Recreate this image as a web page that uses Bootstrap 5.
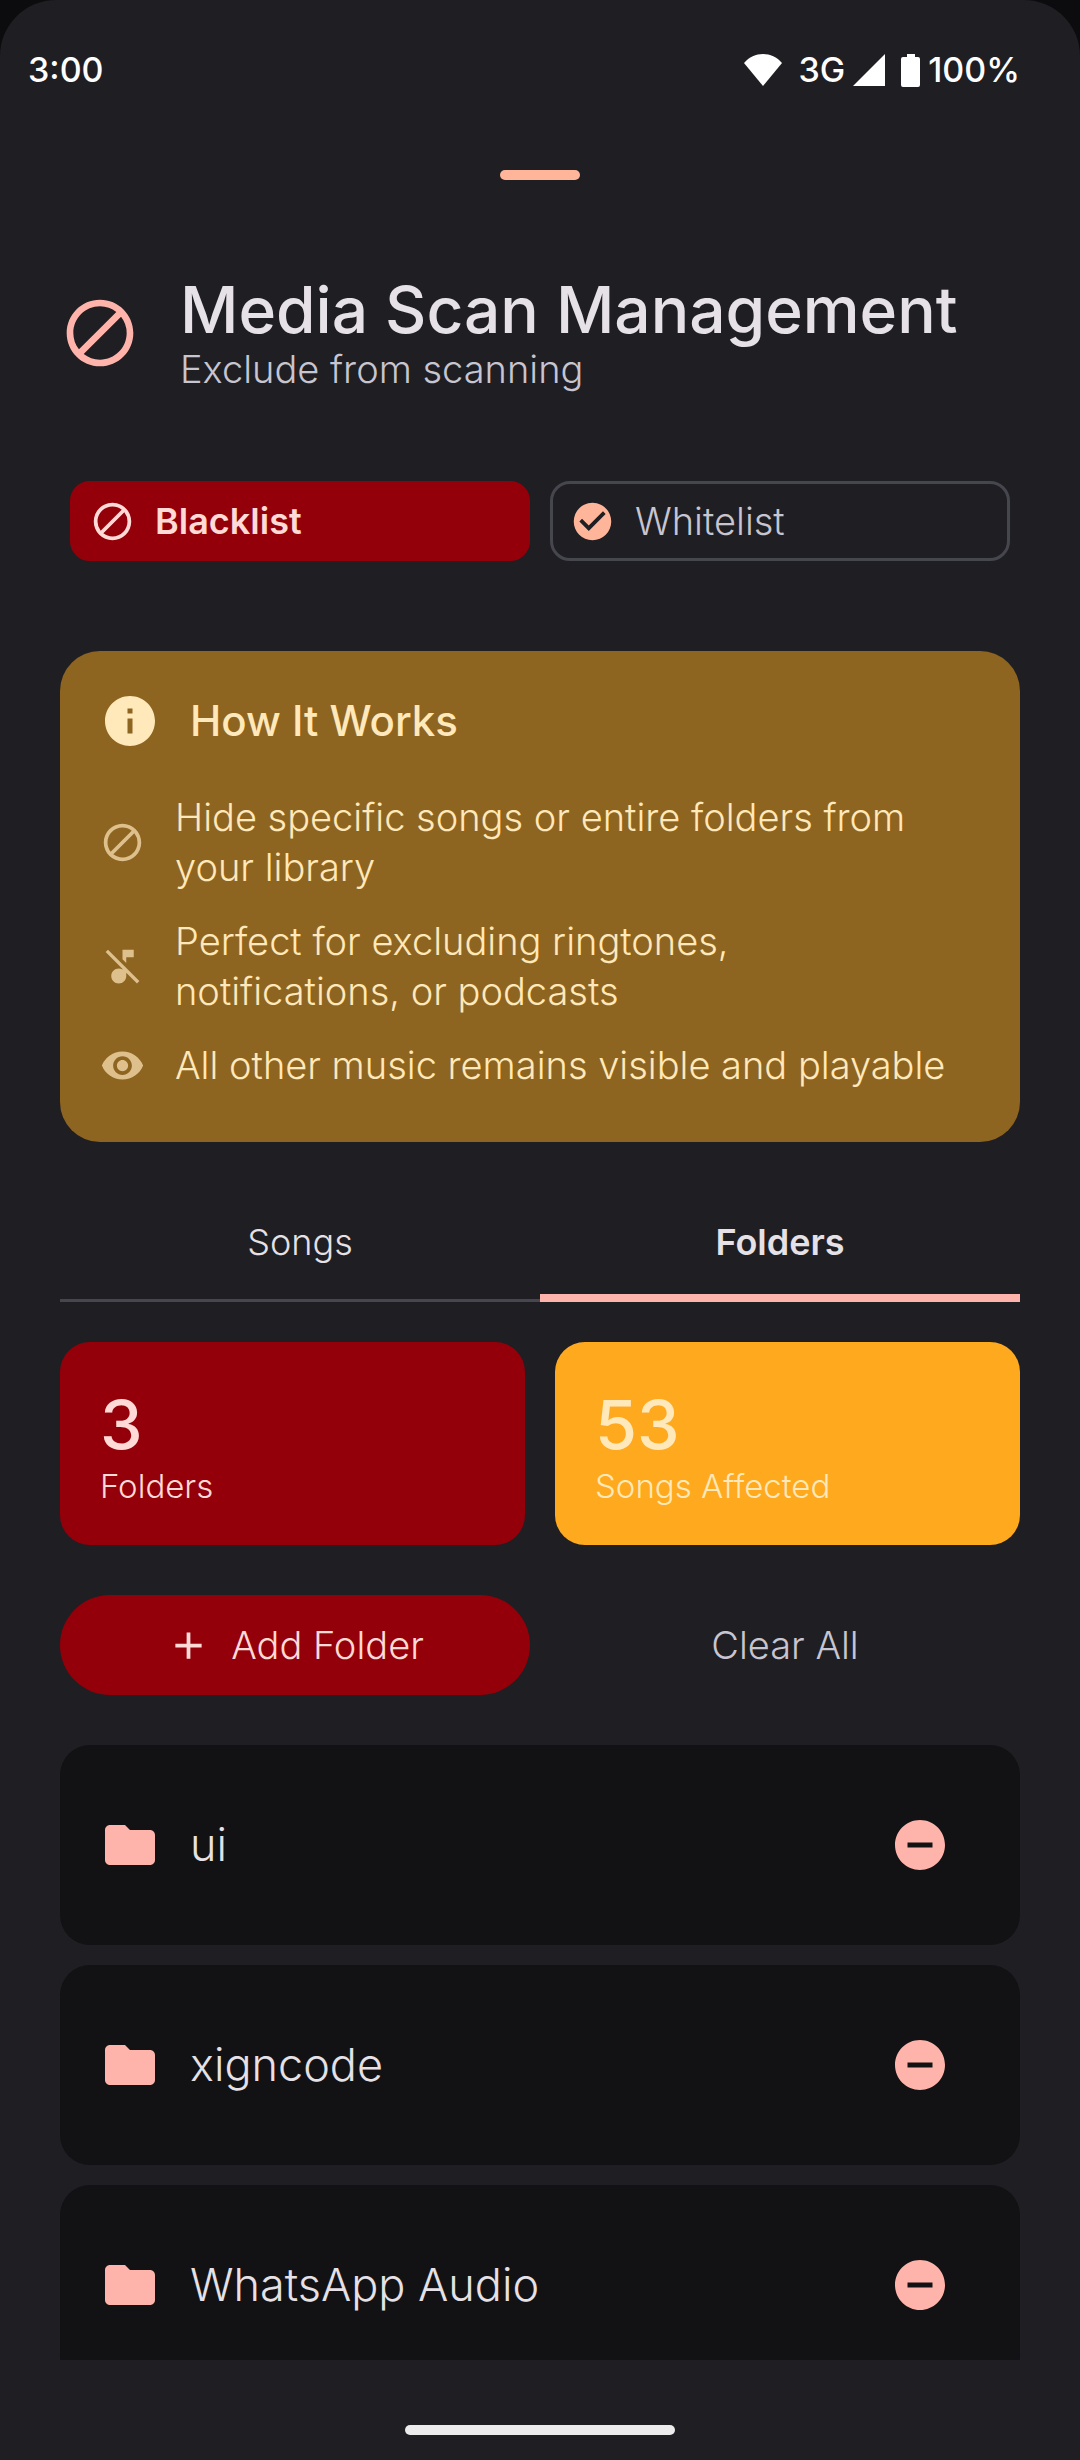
<!DOCTYPE html>
<html lang="en" data-bs-theme="dark">
<head>
<meta charset="utf-8">
<meta name="viewport" content="width=device-width, initial-scale=1">
<title>Media Scan Management</title>
<link href="https://cdn.jsdelivr.net/npm/bootstrap@5.3.0/dist/css/bootstrap.min.css" rel="stylesheet">
<style>
  :root {
    --surface: #1f1e23;
    --surface-low: #121214;
    --outline: #46464f;
    --text: #e5e1e6;
    --text-soft: #c7c5d0;
    --pink: #ffb4ab;
    --peach: #ffb599;
    --red: #93000a;
    --on-red: #ffdad6;
    --cream: #ffe8b9;
  }
  body { background: #0c0c0e; color: var(--text); font-family: Inter, "Noto Sans", sans-serif; font-size: 38px; line-height: 50px; font-weight: 300; }
  svg { display: block; flex: none; fill: currentColor; }
  .screen { background: var(--surface); border-radius: 56px 56px 0 0; }
  .status-bar { height: 140px; padding: 0 60px 0 28px; color: #fff; font-size: 34px; font-weight: 500; }
  .grabber { width: 80px; height: 10px; margin-top: 30px; background: var(--peach); }
  .content { padding: 0 60px; }
  .icon-sm { width: 45px; height: 45px; }
  .icon-md { width: 60px; height: 60px; }
  .icon-lg { width: 80px; height: 80px; }
  .page-head { margin-top: 94px; gap: 40px; color: var(--pink); }
  .page-title { color: var(--text); font-size: 64px; line-height: 72px; font-weight: 500; }
  .page-sub { color: var(--text-soft); line-height: 46px; }
  .modes { margin-top: 89px; padding: 0 10px; gap: 20px; }
  .modes .btn { flex: 1 1 0; height: 80px; padding: 0 17px; gap: 20px; border-radius: 20px; border: 3px solid var(--outline); color: var(--text-soft); font-size: 38px; font-weight: 300; }
  .modes .btn.active { background: var(--red); border-color: var(--red); color: var(--on-red); font-size: 36px; font-weight: 600; }
  .modes .tick { color: var(--peach); }
  .how { margin-top: 90px; padding: 40px 40px 52px; border: 0; border-radius: 40px; background: #8e6421; color: var(--cream); }
  .how-title { color: var(--cream); font-size: 42px; line-height: 50px; font-weight: 500; }
  .how-head { gap: 30px; }
  .how-list { margin-top: 41px; gap: 24px; }
  .how-list li { gap: 30px; }
  .how-list svg { opacity: .7; }
  .tabs { margin-top: 50px; }
  .tabs .nav-link { height: 110px; padding: 0 0 8px; border: 0; border-bottom: 3px solid var(--outline); border-radius: 0; background: transparent; color: var(--text); font-size: 36px; }
  .tabs .nav-link.active { border-bottom: 8px solid var(--pink); padding-bottom: 3px; font-weight: 600; }
  .stats { margin-top: 40px; gap: 30px; }
  .stat { height: 203px; padding: 40px; border: 0; border-radius: 30px; }
  .stat-red { background: var(--red); color: var(--on-red); }
  .stat-orange { background: #ffa91f; color: var(--cream); }
  .stat-num { font-size: 68px; line-height: 84px; font-weight: 500; }
  .stat-label { font-size: 33px; line-height: 40px; }
  .actions { margin-top: 50px; gap: 20px; }
  .actions .btn { height: 100px; padding: 0; gap: 20px; border: 0; font-size: 38px; font-weight: 300; }
  .btn-add, .btn-add:hover { background: var(--red); color: var(--on-red); }
  .btn-clear { color: var(--text-soft); }
  .folders { margin-top: 50px; gap: 20px; }
  .folder { height: 200px; padding: 0 70px 0 40px; gap: 30px; border-radius: 30px; background: var(--surface-low); font-size: 45px; }
  .folder svg { color: var(--pink); }
  .nav-area { height: 100px; padding-top: 40px; }
  .nav-pill { width: 270px; height: 10px; background: #ececec; }
</style>
</head>
<body>
<svg class="d-none" aria-hidden="true">
  <symbol id="block" viewBox="0 0 24 24"><path d="M12 2C6.480 2 2 6.480 2 12s4.480 10 10 10 10-4.480 10-10S17.520 2 12 2zM4 12c0-4.420 3.580-8 8-8 1.850 0 3.550.63 4.900 1.690L5.690 16.900A7.900 7.900 0 0 1 4 12zm8 8c-1.850 0-3.550-.63-4.900-1.690L18.310 7.100A7.900 7.900 0 0 1 20 12c0 4.420-3.580 8-8 8z"/></symbol>
  <symbol id="folder" viewBox="0 0 24 24"><path d="M10 4H4c-1.100 0-1.990.9-1.990 2L2 18c0 1.100.9 2 2 2h16c1.100 0 2-.9 2-2V8c0-1.100-.9-2-2-2h-8l-2-2z"/></symbol>
  <symbol id="remove" viewBox="0 0 24 24"><path d="M12 2C6.480 2 2 6.480 2 12s4.480 10 10 10 10-4.480 10-10S17.520 2 12 2zm5 11H7v-2h10v2z"/></symbol>
</svg>
<div class="screen vh-100 d-flex flex-column overflow-hidden">
  <header class="status-bar d-flex align-items-center justify-content-between flex-shrink-0">
    <span>3:00</span>
    <div class="d-flex align-items-center">
      <svg width="38" height="32" viewBox="0 0 38 32"><path d="M19 32 0 9C10-3 28-3 38 9Z"/></svg>
      <span class="ms-3">3G</span>
      <svg class="ms-2" width="32" height="32" viewBox="0 0 32 32"><path d="M32 0V32H0Z"/></svg>
      <svg class="ms-3" width="19" height="33" viewBox="0 0 19 33"><path d="M6 0h8v3h3a2 2 0 0 1 2 2v26a2 2 0 0 1-2 2H2a2 2 0 0 1-2-2V5a2 2 0 0 1 2-2h4Z"/></svg>
      <span class="ms-2">100%</span>
    </div>
  </header>
  <main class="flex-grow-1 overflow-hidden">
    <div class="grabber rounded-pill mx-auto"></div>
    <div class="content">
      <div class="page-head d-flex align-items-center">
        <svg class="icon-lg"><use href="#block"/></svg>
        <div>
          <h1 class="page-title mb-0">Media Scan Management</h1>
          <p class="page-sub mb-0">Exclude from scanning</p>
        </div>
      </div>

      <div class="modes d-flex" role="group" aria-label="List type">
        <button type="button" class="btn active d-flex align-items-center"><svg class="icon-sm"><use href="#block"/></svg>Blacklist</button>
        <button type="button" class="btn d-flex align-items-center"><svg class="icon-sm tick" viewBox="0 0 24 24"><path d="M12 2C6.480 2 2 6.480 2 12s4.480 10 10 10 10-4.480 10-10S17.520 2 12 2zm-2 15-5-5 1.410-1.410L10 14.170l7.590-7.590L19 8l-9 9z"/></svg>Whitelist</button>
      </div>

      <section class="how card">
        <div class="how-head d-flex align-items-center">
          <svg class="icon-md" viewBox="0 0 24 24"><path d="M12 2C6.480 2 2 6.480 2 12s4.480 10 10 10 10-4.480 10-10S17.520 2 12 2zm1 15h-2v-6h2v6zm0-8h-2V7h2v2z"/></svg>
          <h2 class="how-title mb-0">How It Works</h2>
        </div>
        <ul class="how-list list-unstyled d-flex flex-column mb-0">
          <li class="d-flex align-items-center"><svg class="icon-sm"><use href="#block"/></svg><span>Hide specific songs or entire folders from<br>your library</span></li>
          <li class="d-flex align-items-center"><svg class="icon-sm" viewBox="0 0 24 24"><path d="M4.270 3 3 4.270l9 9v.28c-.59-.34-1.270-.55-2-.55-2.210 0-4 1.790-4 4s1.790 4 4 4 4-1.790 4-4v-1.730L19.730 21 21 19.730 4.270 3zM14 7h4V3h-6v5.180l2 2z"/></svg><span>Perfect for excluding ringtones,<br>notifications, or podcasts</span></li>
          <li class="d-flex align-items-center"><svg class="icon-sm" viewBox="0 0 24 24"><path d="M12 4.500C7 4.500 2.730 7.610 1 12c1.730 4.390 6 7.500 11 7.500s9.270-3.110 11-7.500c-1.730-4.390-6-7.500-11-7.500zM12 17c-2.760 0-5-2.240-5-5s2.240-5 5-5 5 2.240 5 5-2.240 5-5 5zm0-8c-1.660 0-3 1.340-3 3s1.340 3 3 3 3-1.340 3-3-1.340-3-3-3z"/></svg><span>All other music remains visible and playable</span></li>
        </ul>
      </section>

      <div class="tabs nav nav-justified" role="tablist">
        <button type="button" class="nav-link nav-item" role="tab" aria-selected="false">Songs</button>
        <button type="button" class="nav-link nav-item active" role="tab" aria-selected="true">Folders</button>
      </div>

      <div class="stats d-flex">
        <div class="stat stat-red card w-50"><span class="stat-num">3</span><span class="stat-label">Folders</span></div>
        <div class="stat stat-orange card w-50"><span class="stat-num">53</span><span class="stat-label">Songs Affected</span></div>
      </div>

      <div class="actions d-flex">
        <button type="button" class="btn btn-add rounded-pill w-50 d-flex align-items-center justify-content-center"><svg class="icon-sm" viewBox="0 0 24 24"><path d="M19 13h-6v6h-2v-6H5v-2h6V5h2v6h6v2z"/></svg>Add Folder</button>
        <button type="button" class="btn btn-clear w-50">Clear All</button>
      </div>

      <ul class="folders list-unstyled d-flex flex-column mb-0">
        <li class="folder d-flex align-items-center"><svg class="icon-md"><use href="#folder"/></svg><span class="flex-grow-1">ui</span><button type="button" class="btn p-0 border-0" aria-label="Remove ui"><svg class="icon-md"><use href="#remove"/></svg></button></li>
        <li class="folder d-flex align-items-center"><svg class="icon-md"><use href="#folder"/></svg><span class="flex-grow-1">xigncode</span><button type="button" class="btn p-0 border-0" aria-label="Remove xigncode"><svg class="icon-md"><use href="#remove"/></svg></button></li>
        <li class="folder d-flex align-items-center"><svg class="icon-md"><use href="#folder"/></svg><span class="flex-grow-1">WhatsApp Audio</span><button type="button" class="btn p-0 border-0" aria-label="Remove WhatsApp Audio"><svg class="icon-md"><use href="#remove"/></svg></button></li>
      </ul>
    </div>
  </main>
  <footer class="nav-area d-flex align-items-center justify-content-center flex-shrink-0"><div class="nav-pill rounded-pill"></div></footer>
</div>
<script src="https://cdn.jsdelivr.net/npm/bootstrap@5.3.0/dist/js/bootstrap.bundle.min.js"></script>
</body>
</html>
